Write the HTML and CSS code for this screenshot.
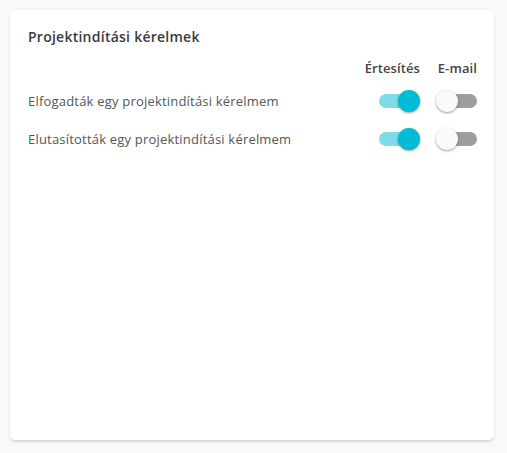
FILE: index.html
```html
<!DOCTYPE html>
<html lang="hu">
<head>
<meta charset="utf-8">
<link rel="stylesheet" href="styles.css">
</head>
<body>
<div class="card">
  <h2 class="title">Projektindítási kérelmek</h2>
  <div class="grid">
    <div></div>
    <div class="head">Értesítés</div>
    <div class="head">E-mail</div>

    <div class="label">Elfogadták egy projektindítási kérelmem</div>
    <div class="cell"><span class="toggle on"><span class="track"></span><span class="thumb"></span></span></div>
    <div class="cell"><span class="toggle"><span class="track"></span><span class="thumb"></span></span></div>

    <div class="label">Elutasították egy projektindítási kérelmem</div>
    <div class="cell"><span class="toggle on"><span class="track"></span><span class="thumb"></span></span></div>
    <div class="cell"><span class="toggle"><span class="track"></span><span class="thumb"></span></span></div>
  </div>
</div>
</body>
</html>
```

FILE: styles.css
```css
html, body {
  margin: 0;
  padding: 0;
  background: #f9f9f9;
}
body {
  padding: 10px 13px 13px 10px;
  font-family: "Open Sans", "Noto Sans", sans-serif;
  color: #444;
}
.card {
  box-sizing: border-box;
  width: 484px;
  height: 430px;
  background: #fff;
  border-radius: 5px;
  box-shadow: 0 2px 2px rgba(0,0,0,0.12), 0 0 3px rgba(0,0,0,0.06);
  padding: 17px 17px 0 18px;
}
.title {
  margin: 0;
  font-size: 14px;
  font-weight: 600;
  letter-spacing: 0.25px;
  color: #3a3a3a;
  line-height: 20px;
}
.grid {
  margin-top: 12px;
  display: grid;
  grid-template-columns: 1fr auto auto;
  column-gap: 16px;
  align-items: center;
}
.head {
  font-size: 13px;
  font-weight: 600;
  letter-spacing: 0.1px;
  color: #444;
  text-align: right;
  line-height: 18px;
  padding-bottom: 5px;
}
.label {
  font-size: 13px;
  letter-spacing: 0.2px;
  color: #555;
  height: 38px;
  line-height: 38px;
}
.cell {
  display: flex;
  justify-content: flex-end;
}
.toggle {
  position: relative;
  display: block;
  width: 41px;
  height: 22px;
}
.track {
  position: absolute;
  left: 5px;
  top: 4px;
  width: 36px;
  height: 14px;
  border-radius: 7px;
  background: #9e9e9e;
}
.thumb {
  position: absolute;
  left: 0;
  top: 0;
  width: 22px;
  height: 22px;
  border-radius: 50%;
  background: #fafafa;
  box-shadow: 0 1px 3px rgba(0,0,0,0.3), 0 1px 1px rgba(0,0,0,0.12);
}
.toggle.on .track {
  left: 0;
  background: #7edbe8;
}
.toggle.on .thumb {
  left: auto;
  right: 0;
  background: #00bcd4;
}
```
